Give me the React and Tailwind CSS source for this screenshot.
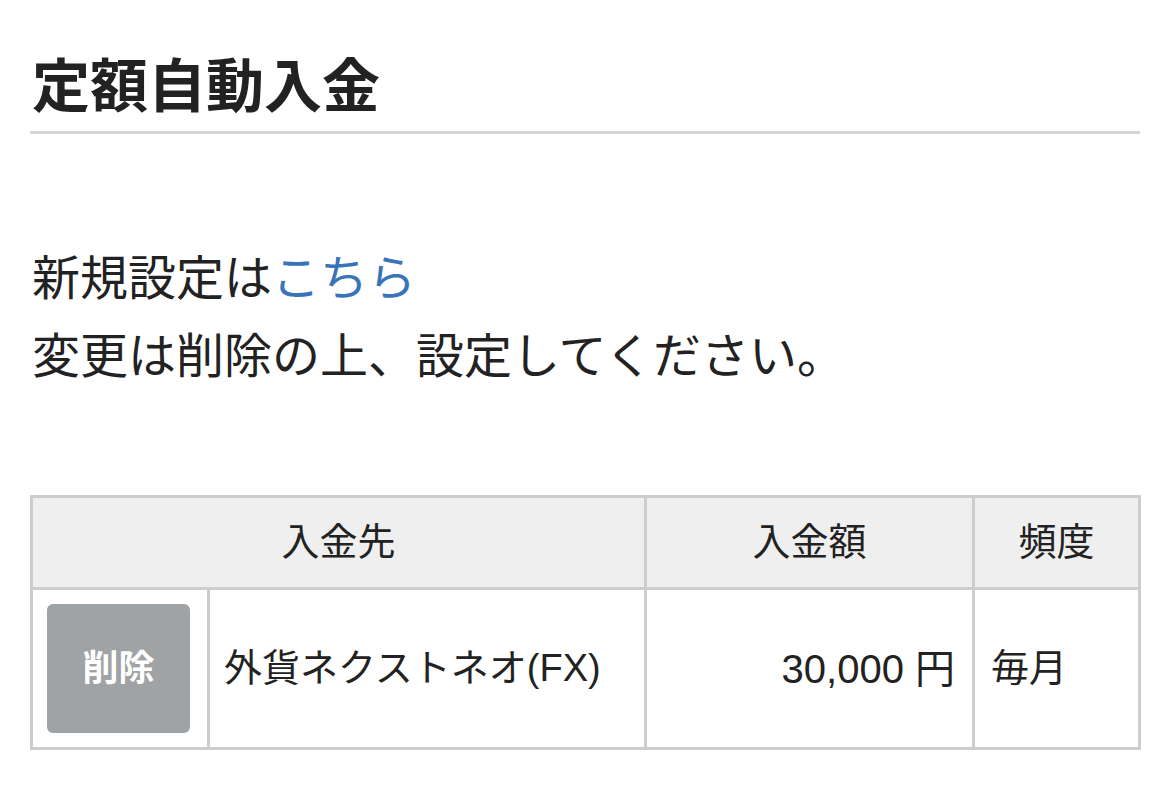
const FONT = '"Liberation Sans", "Noto Sans CJK JP", sans-serif';

export default function App() {
  return (
    <div className="bg-white min-h-screen px-[30px] text-[#222]" style={{ fontFamily: FONT }}>
      {/* Heading */}
      <h1 className="pt-[44px] pb-[2px] text-[58px] font-bold leading-[85px] border-b-[3px] border-[#d5d5d5] pl-[2px]">
        定額自動入金
      </h1>

      {/* Notice */}
      <div className="mt-[106px] text-[48px] leading-[78px] pl-[2px]">
        <p>
          新規設定は<a href="#" className="text-[#3a74b8]">こちら</a>
        </p>
        <p>変更は削除の上、設定してください。</p>
      </div>

      {/* Settings table */}
      <table className="mt-[99px] w-[1108px] table-fixed border-collapse border-[3px] border-[#cdcdcd] text-[38px]">
        <colgroup>
          <col className="w-[177px]" />
          <col className="w-[437px]" />
          <col className="w-[328px]" />
          <col className="w-[166px]" />
        </colgroup>
        <thead>
          <tr className="h-[92px] bg-[#efefef]">
            <th colSpan={2} className="border-[3px] border-[#cdcdcd] font-normal">入金先</th>
            <th className="border-[3px] border-[#cdcdcd] font-normal">入金額</th>
            <th className="border-[3px] border-[#cdcdcd] font-normal">頻度</th>
          </tr>
        </thead>
        <tbody>
          <tr className="h-[160px]">
            <td className="border-[3px] border-[#cdcdcd] px-[14px]">
              <button className="w-[143px] h-[129px] rounded-[6px] bg-[#a0a3a5] text-white text-[36px] font-bold">
                削除
              </button>
            </td>
            <td className="border-[3px] border-[#cdcdcd] pl-[14px]">外貨ネクストネオ(FX)</td>
            <td className="border-[3px] border-[#cdcdcd] pr-[17px] text-right text-[40px]">30,000 円</td>
            <td className="border-[3px] border-[#cdcdcd] pl-[16px]">毎月</td>
          </tr>
        </tbody>
      </table>
    </div>
  );
}
